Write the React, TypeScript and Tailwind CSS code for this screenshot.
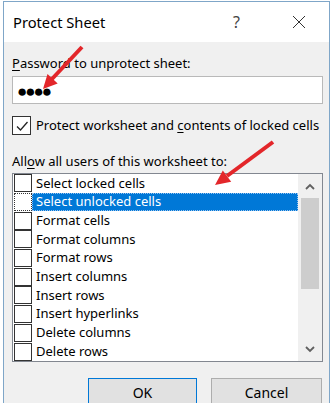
import React from "react";

const items = [
  "Select locked cells",
  "Select unlocked cells",
  "Format cells",
  "Format columns",
  "Format rows",
  "Insert columns",
  "Insert rows",
  "Insert hyperlinks",
  "Delete columns",
  "Delete rows",
];

function Chevron({ up }: { up?: boolean }) {
  return (
    <svg width="10" height="7" viewBox="0 0 10 7" className="text-[#606060]">
      <path
        d={up ? "M1 6 L5 2 L9 6" : "M1 1 L5 5 L9 1"}
        fill="none"
        stroke="currentColor"
        strokeWidth="1.8"
      />
    </svg>
  );
}

function CheckMark() {
  return (
    <svg width="16" height="16" viewBox="0 0 16 16">
      <path d="M3 8.5 L6.5 12 L13.5 4" fill="none" stroke="#222" strokeWidth="1.3" />
    </svg>
  );
}

export default function App() {
  return (
    <div
      className="relative w-[334px] h-[403px] overflow-hidden bg-white text-[#000]"
      style={{ fontFamily: '"Noto Sans", "Open Sans", sans-serif' }}
    >
      <div className="ml-[3px] mt-[1px] w-[327px] h-[420px] border border-[#7fa6c8] bg-[#f0f0f0]">
        {/* title bar */}
        <div className="flex h-[40px] items-center bg-white pl-[9px] pr-[23px]">
          <span className="text-[14.7px] leading-none">Protect Sheet</span>
          <span className="ml-auto mr-[52px] text-[16px] leading-none text-[#444]">?</span>
          <svg width="14" height="14" viewBox="0 0 14 14">
            <path d="M1 1 L13 13 M13 1 L1 13" stroke="#333" strokeWidth="1" />
          </svg>
        </div>

        {/* body */}
        <div className="pl-[8px] pr-[6px] text-[13px]">
          <div className="mt-[12px] leading-[19px]">
            <span className="underline underline-offset-2">P</span>assword to unprotect sheet:
          </div>
          <div className="mt-[3px] flex h-[28px] items-center border border-[#b9b9b9] bg-white pl-[4px]">
            <span className="text-[17px] leading-none tracking-[-2px]">●●●●</span>
          </div>

          <div className="mt-[12px] flex items-center gap-[5px]">
            <div className="flex h-[19px] w-[19px] items-center justify-center border border-[#333] bg-white">
              <CheckMark />
            </div>
            <span className="whitespace-nowrap leading-[19px]">
              Protect worksheet and <span className="underline underline-offset-2">c</span>ontents of locked cells
            </span>
          </div>

          <div className="mt-[17px] leading-[19px]">
            All<span className="underline underline-offset-2">o</span>w all users of this worksheet to:
          </div>

          <div className="mt-[2px] flex h-[189px] border border-[#828790] bg-white">
            <div className="flex flex-1 flex-col">
              {items.map((label, i) => (
                <div key={label} className="flex h-[18.7px] items-center">
                  <div
                    className={
                      i === 1
                        ? "ml-[1px] h-[18px] w-[18px] border border-dotted border-[#333] bg-white"
                        : "ml-[1px] h-[18px] w-[18px] border border-[#333] bg-white"
                    }
                  />
                  <div
                    className={
                      i === 1
                        ? "flex h-full flex-1 items-center border border-dotted border-[#9ac4f0] bg-[#0078d7] pl-[3px] text-white"
                        : "flex h-full flex-1 items-center pl-[4px]"
                    }
                  >
                    {label}
                  </div>
                </div>
              ))}
            </div>
            <div className="flex w-[24px] flex-col bg-[#f0f0f0]">
              <div className="flex h-[24px] items-center justify-center">
                <Chevron up />
              </div>
              <div className="mx-[3px] h-[91px] bg-[#cdcdcd]" />
              <div className="flex-1" />
              <div className="flex h-[24px] items-center justify-center">
                <Chevron />
              </div>
            </div>
          </div>

          <div className="mt-[16px] flex justify-end gap-[14px] pr-[1px]">
            <button className="h-[28px] w-[109px] border border-[#0078d7] bg-[#e1e1e1] text-[14px]">
              OK
            </button>
            <button className="h-[28px] w-[111px] border border-[#adadad] bg-[#e1e1e1] text-[14px]">
              Cancel
            </button>
          </div>
        </div>
      </div>

      {/* annotation arrows */}
      <svg className="pointer-events-none absolute left-0 top-0" width="334" height="403">
        <line x1="82" y1="47" x2="52" y2="79" stroke="#e3262a" strokeWidth="4" />
        <polygon points="43,89 57.7,83.5 47.5,73.9" fill="#e3262a" />
        <line x1="273" y1="142" x2="227" y2="176" stroke="#e3262a" strokeWidth="4" />
        <polygon points="215,185 231.2,181.7 222.8,170.4" fill="#e3262a" />
      </svg>
    </div>
  );
}
